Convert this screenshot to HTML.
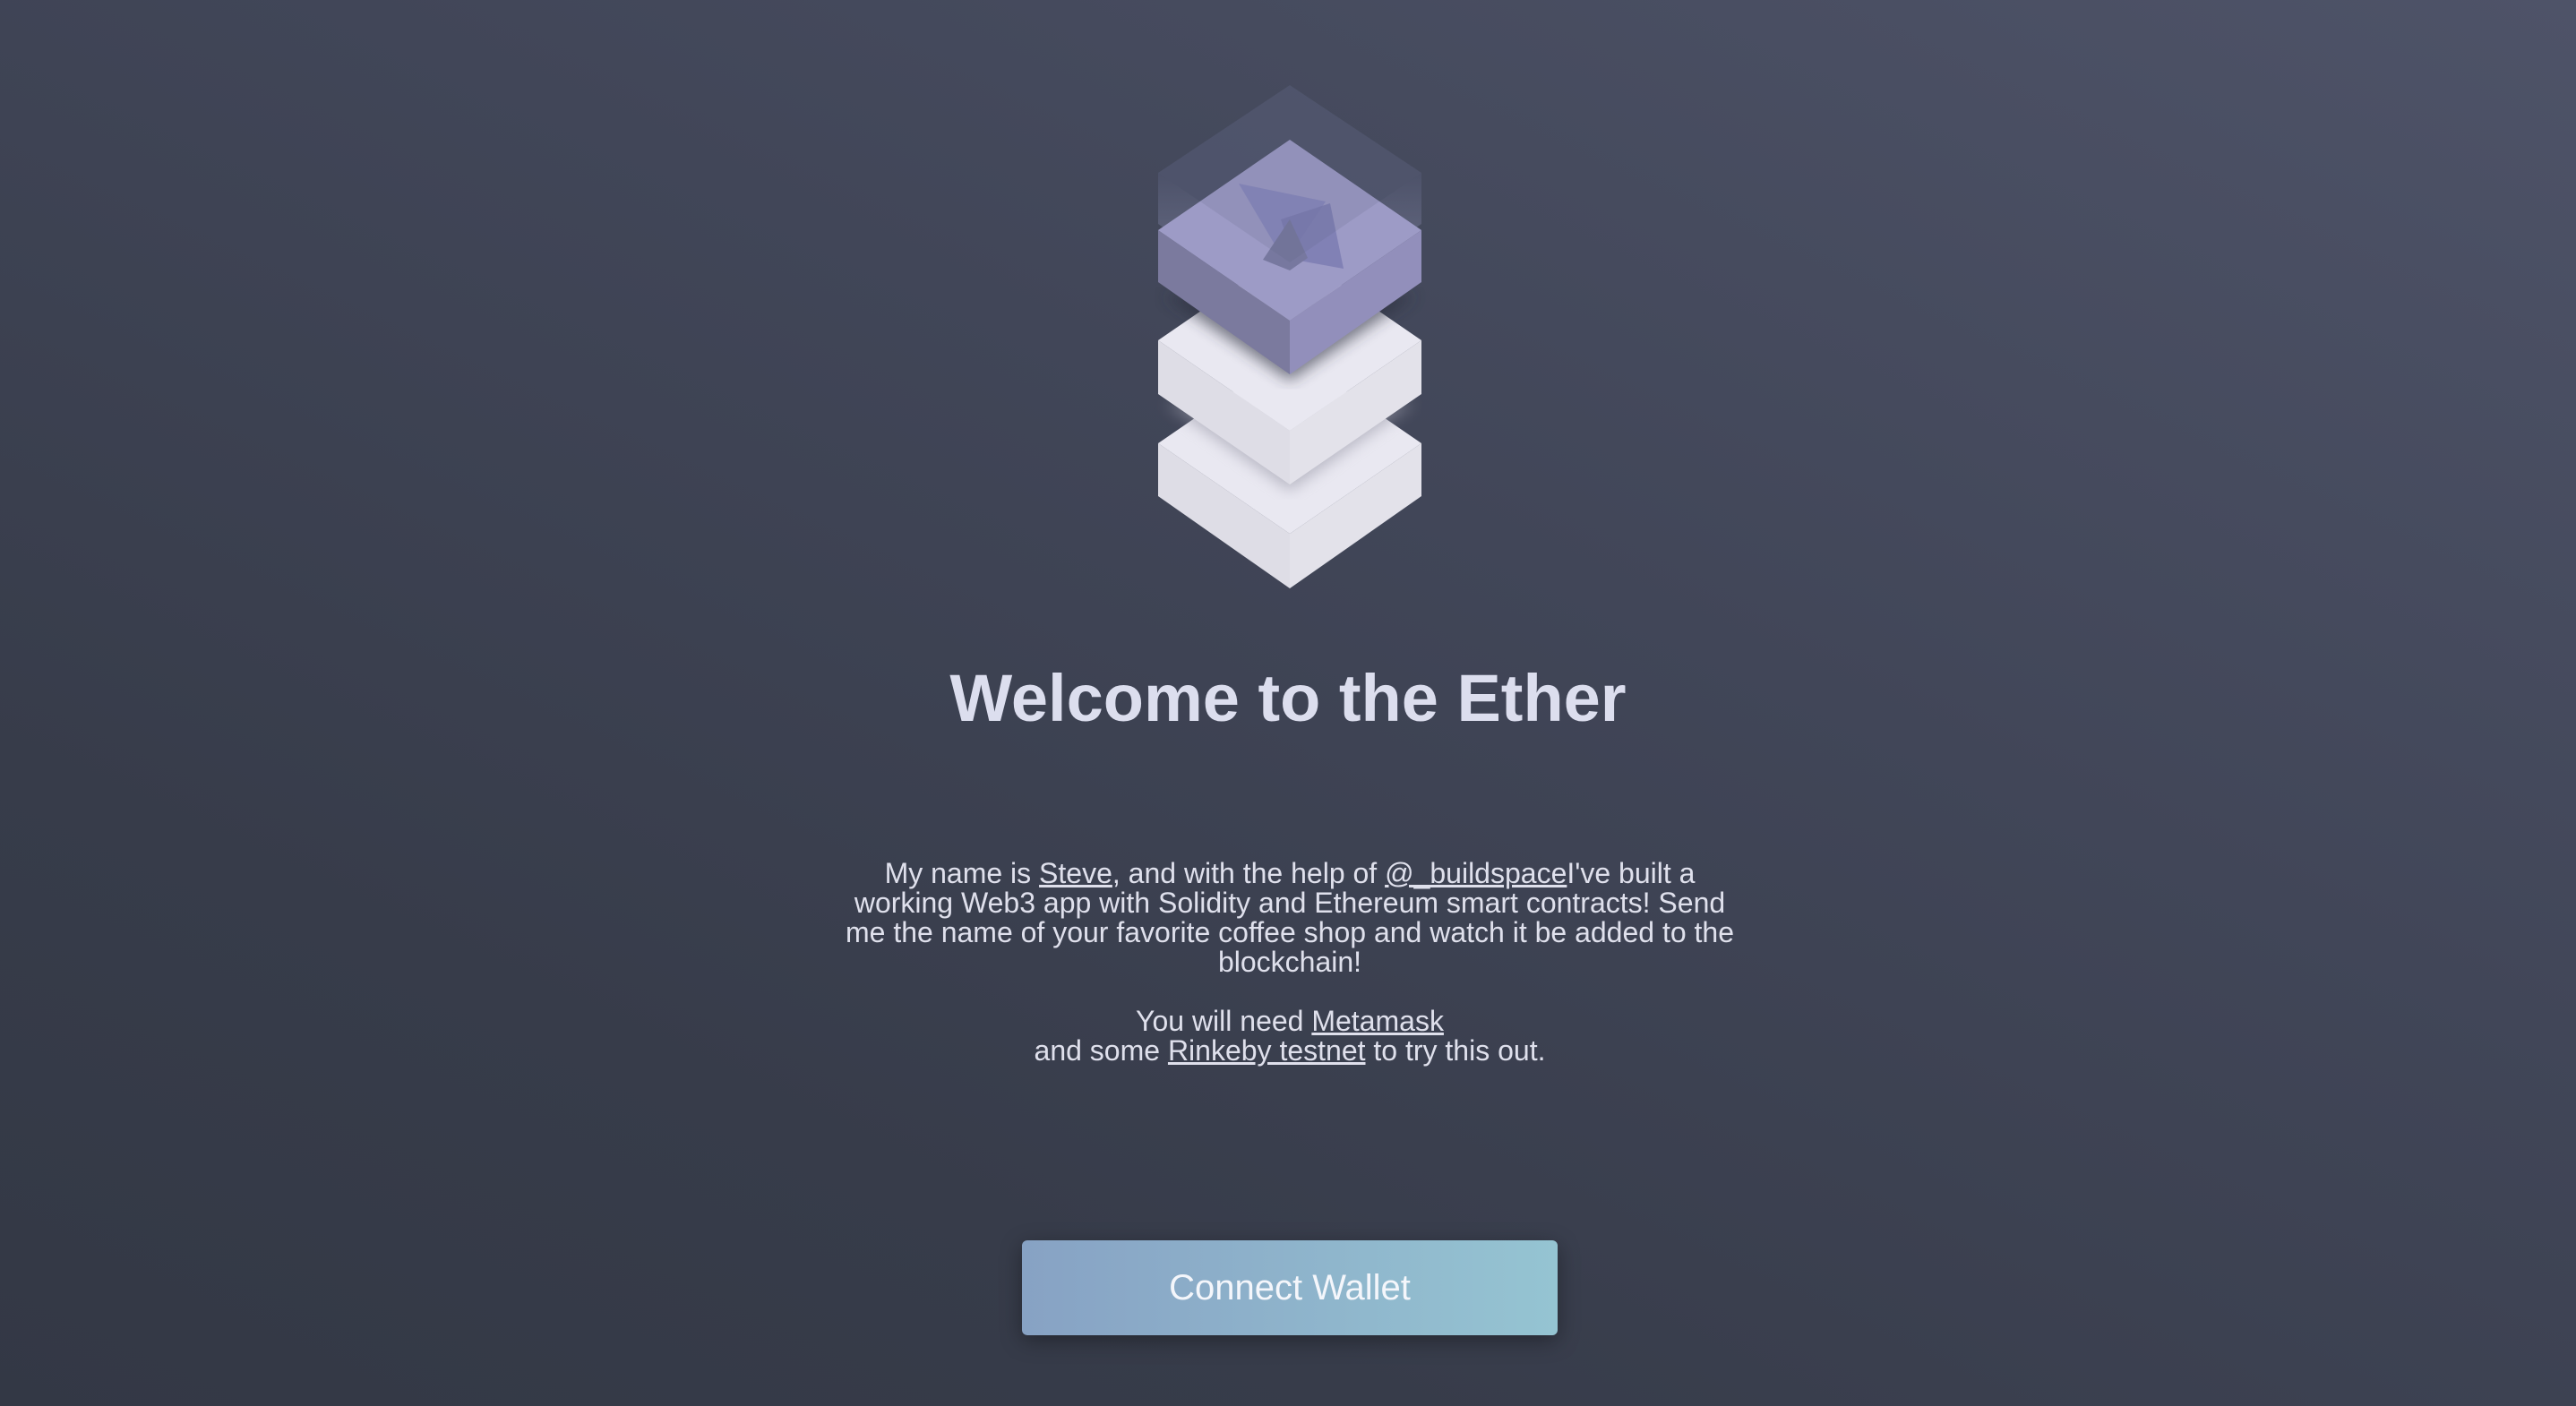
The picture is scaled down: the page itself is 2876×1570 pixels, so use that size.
<!DOCTYPE html>
<html><head><style>
html,body{margin:0;padding:0}
body{width:2876px;height:1570px;overflow:hidden;background:linear-gradient(205deg,#4e5368 0%,#414658 40%,#373c4a 75%,#333845 100%);font-family:"Liberation Sans",sans-serif;color:#e2e3ef;position:relative}
h1{position:absolute;left:0;width:2876px;top:730px;margin:0;text-align:center;font-size:74px;font-weight:bold;color:#dcdeee;line-height:100px}
.p{position:absolute;left:940px;width:1000px;top:959px;text-align:center;font-size:32px;line-height:33px;color:#dfe0ec}
.p a{color:#dfe0ec;text-decoration:underline}
.btn{position:absolute;left:1141px;top:1385px;width:598px;height:106px;border-radius:6px;background:linear-gradient(90deg,#87a2c4,#95c4d2);box-shadow:0 6px 24px rgba(0,0,0,.35);color:#f4f6fb;font-size:40px;display:flex;align-items:center;justify-content:center}
</style></head><body>
<svg style="position:absolute;left:0;top:0" width="2876" height="720">
<defs><filter id="s"><feGaussianBlur stdDeviation="8"/></filter>
<linearGradient id="gs" x1="0" y1="0" x2="0" y2="1"><stop offset="0" stop-color="#4c5169"/><stop offset="1" stop-color="#8a8ea8"/></linearGradient></defs>
<!-- white box 2 -->
<polygon points="1293,495 1440,596 1440,657 1293,554" fill="#dedde6"/>
<polygon points="1587,495 1440,596 1440,657 1587,554" fill="#e3e2ea"/>
<polygon points="1293,495 1440,394 1587,495 1440,596" fill="#e9e8f1"/>
<!-- white box 1 -->
<polygon points="1300,450 1440,548 1580,450" fill="#9a9aa8" filter="url(#s)" opacity=".6"/>
<polygon points="1293,380 1440,481 1440,541 1293,440" fill="#dedde6"/>
<polygon points="1587,380 1440,481 1440,541 1587,440" fill="#e3e2ea"/>
<polygon points="1293,380 1440,279 1587,380 1440,481" fill="#e9e8f1"/>
<!-- glass back -->
<polygon points="1293,193 1440,95 1587,193 1587,250 1440,350 1293,250" fill="#50556d" opacity=".8"/>
<polygon points="1293,193 1293,250 1440,350 1440,293" fill="url(#gs)" opacity=".6"/>
<polygon points="1587,193 1587,250 1440,350 1440,293" fill="url(#gs)" opacity=".6"/>
<!-- purple box -->
<polygon points="1300,330 1440,425 1580,330" fill="#2c2f3c" filter="url(#s)" opacity=".6"/>
<polygon points="1293,257 1440,358 1440,418 1293,315" fill="#7b7a9e"/>
<polygon points="1587,257 1440,358 1440,418 1587,315" fill="#928fbb"/>
<polygon points="1293,257 1440,156 1587,257 1440,358" fill="#9d9bc6"/>
<!-- eth -->
<polygon points="1383,205 1480,225 1435,293" fill="#8585bd" opacity=".8"/>
<polygon points="1430,245 1485,227 1500,300 1445,290" fill="#7a7ab0" opacity=".8"/>
<polygon points="1410,290 1440,245 1460,288 1440,302" fill="#77789f"/>
<!-- glass overlay -->
<polygon points="1293,193 1440,95 1587,193 1440,293" fill="#5a5f7c" opacity=".15"/>
</svg>
<h1>Welcome to the Ether</h1>
<div class="p">My name is <a>Steve</a>, and with the help of <a>@_buildspace</a>I've built a working Web3 app with Solidity and Ethereum smart contracts! Send me the name of your favorite coffee shop and watch it be added to the blockchain!<br><br>You will need <a>Metamask</a><br>and some <a>Rinkeby testnet</a> to try this out.</div>
<div class="btn">Connect Wallet</div>
</body></html>
